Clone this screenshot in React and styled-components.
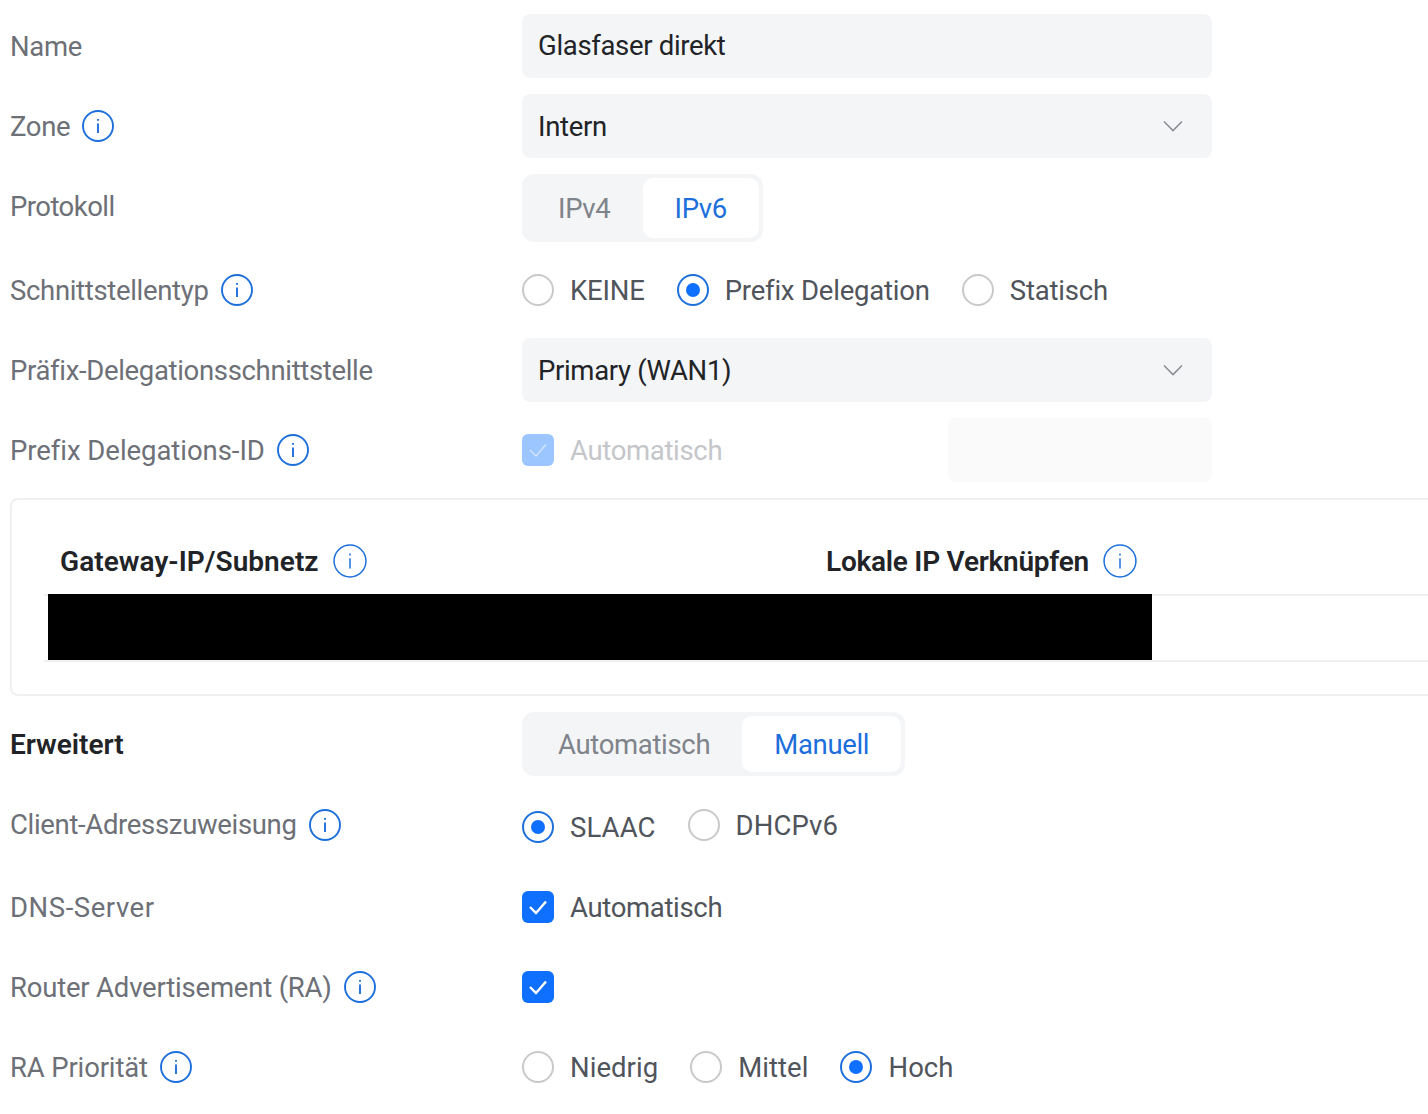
import React from "react";
import styled, { createGlobalStyle } from "styled-components";

const Global = createGlobalStyle`
  html, body { margin: 0; padding: 0; background: #fff; overflow: hidden; }
  body { font-family: "Roboto", "Liberation Sans", sans-serif; font-variant-ligatures: none; }
  * { box-sizing: border-box; }
`;
const Page = styled.div`
  width: 1428px; height: 1114px; overflow: hidden;
  padding: 14px 0 0 10px;
  display: flex; flex-direction: column; gap: 16px;
  font-size: 27.5px; letter-spacing: -0.33px;
`;
const Row = styled.div`
  display: grid; grid-template-columns: 512px 690px;
  min-height: ${p => p.$h || 64}px;
  align-items: center;
`;
const Label = styled.div`
  display: flex; align-items: center; gap: 12px;
  color: #6d7077;
  align-self: ${p => p.$top ? "start" : "center"};
  padding-top: ${p => p.$top ? 16 : 0}px;
  padding-bottom: ${p => p.$pb || 0}px;
  letter-spacing: ${p => p.$ls ?? -0.33}px;
  ${p => p.$bold && "color: #212327; font-weight: 600; font-size: 28px; letter-spacing: 0;"}
`;
const Field = styled.div`
  height: 64px; width: ${p => p.$w || "100%"};
  background: ${p => p.$disabled ? "#fafafb" : "#f4f5f7"};
  border-radius: 8px; padding: 0 16px ${p => p.$select ? 0 : 1}px;
  display: flex; align-items: center; justify-content: space-between;
  color: #212327;
`;
const Chevron = styled.svg`
  width: 20px; height: 12px; margin-right: 13px; fill: none; stroke: #8b8e94; stroke-width: 1.6;
`;
const Segmented = styled.div`
  display: inline-flex; justify-self: start;
  background: #f4f5f7; border-radius: 12px; padding: 4px;
  height: ${p => p.$h}px;
`;
const Seg = styled.div`
  padding: 0 32px; display: flex; align-items: center;
  border-radius: 10px;
  background: ${p => p.$active ? "#fff" : "transparent"};
  color: ${p => p.$active ? "#1d6fdc" : "#7f838a"};
`;
const Options = styled.div`
  display: flex; align-items: ${p => p.$start ? "flex-start" : "center"}; gap: 32px;
  letter-spacing: ${p => p.$ls ?? -0.2}px;
`;
const Option = styled.div`
  display: flex; align-items: center; gap: 16px; color: ${p => p.$muted ? "#c4c6ca" : "#50545b"};
  margin-top: ${p => p.$mt || 0}px;
`;
const Radio = styled.span`
  width: 32px; height: 32px; border-radius: 50%; flex: none;
  border: 2px solid ${p => p.$on ? "#1d6fdc" : "#c8c9cb"};
  display: flex; align-items: center; justify-content: center;
  &::after { content: ""; width: 14px; height: 14px; border-radius: 50%; background: ${p => p.$on ? "#0f6fff" : "transparent"}; }
`;
const Check = styled.span`
  width: 32px; height: 32px; border-radius: 6px; flex: none;
  background: ${p => p.$disabled ? "#9bc6ff" : "#0f6fff"};
  display: flex; align-items: center; justify-content: center;
`;
const CheckMark = styled.svg`
  width: 20px; height: 16px; fill: none; stroke: ${p => p.$disabled ? "#d5e6ff" : "#fff"}; stroke-width: ${p => p.$disabled ? 1.4 : 2.4};
`;
const Split = styled.div`
  display: flex; align-items: center; justify-content: space-between;
`;
const Card = styled.div`
  width: 1500px; height: 198px; flex: none;
  border: 2px solid #f0f0f1; border-radius: 8px;
  padding: 34px 0 0 32px;
`;
const THead = styled.div`
  display: grid; grid-template-columns: 766px 1fr;
  height: 60px; align-items: center; padding: 0 0 0 16px;
  color: #212327; font-weight: 600; font-size: 28px;
`;
const HeadCell = styled.div`
  display: flex; align-items: center; gap: 14px; padding-bottom: 6px;
  letter-spacing: ${p => p.$tight ? -0.25 : 0.05}px;
`;
const TRow = styled.div`
  height: 68px; border-top: 2px solid #eff0f1; border-bottom: 2px solid #eff0f1;
`;
const Redacted = styled.div`
  width: 1104px; height: 66px; margin: -2px 0 0 4px; background: #000;
`;
const InfoSvg = styled.svg`
  width: ${p => p.$s || 32}px; height: ${p => p.$s || 32}px; flex: none;
  fill: none; stroke: #1d6fdc;
`;
const Info = ({ thin }) => (
  <InfoSvg $s={thin ? 34 : 32} viewBox="0 0 32 32" strokeWidth={thin ? 1.4 : 1.9}>
    <circle cx="16" cy="16" r="15" />
    <path d="M16 13.5V23" />
    <path d="M16 9v1.8" />
  </InfoSvg>
);
const Down = () => (
  <Chevron viewBox="0 0 20 12"><path d="M1 1.5l9 9 9-9" /></Chevron>
);
const Tick = ({ disabled }) => (
  <CheckMark $disabled={disabled} viewBox="0 0 20 16"><path d="M2 8l6 6L18 2.5" /></CheckMark>
);

export default function App() {
  return (
    <>
      <Global />
      <Page>
        <Row><Label>Name</Label><Field>Glasfaser direkt</Field></Row>
        <Row><Label>Zone <Info /></Label><Field $select>Intern<Down /></Field></Row>
        <Row $h={68}>
          <Label $top $ls={-0.55}>Protokoll</Label>
          <Segmented $h={68}><Seg>IPv4</Seg><Seg $active>IPv6</Seg></Segmented>
        </Row>
        <Row>
          <Label>Schnittstellentyp <Info /></Label>
          <Options>
            <Option><Radio />KEINE</Option>
            <Option><Radio $on />Prefix Delegation</Option>
            <Option><Radio />Statisch</Option>
          </Options>
        </Row>
        <Row><Label>Präfix-Delegationsschnittstelle</Label><Field $select>Primary (WAN1)<Down /></Field></Row>
        <Row>
          <Label $ls={-0.05}>Prefix Delegations-ID <Info /></Label>
          <Split>
            <Option $muted><Check $disabled><Tick disabled /></Check>Automatisch</Option>
            <Field $disabled $w="264px" />
          </Split>
        </Row>
        <Card>
          <THead>
            <HeadCell>Gateway-IP/Subnetz <Info thin /></HeadCell>
            <HeadCell $tight>Lokale IP Verknüpfen <Info thin /></HeadCell>
          </THead>
          <TRow><Redacted /></TRow>
        </Card>
        <Row>
          <Label $bold>Erweitert</Label>
          <Segmented $h={64}><Seg>Automatisch</Seg><Seg $active>Manuell</Seg></Segmented>
        </Row>
        <Row $h={67}>
          <Label $pb={2}>Client-Adresszuweisung <Info /></Label>
          <Options $start $ls={0.1}>
            <Option $mt={3}><Radio $on />SLAAC</Option>
            <Option $mt={1}><Radio />DHCPv6</Option>
          </Options>
        </Row>
        <Row>
          <Label $ls={0.55}>DNS-Server</Label>
          <Option><Check><Tick /></Check>Automatisch</Option>
        </Row>
        <Row>
          <Label $ls={-0.2}>Router Advertisement (RA) <Info /></Label>
          <Check><Tick /></Check>
        </Row>
        <Row>
          <Label $ls={-0.15}>RA Priorität <Info /></Label>
          <Options $ls={0.05}>
            <Option><Radio />Niedrig</Option>
            <Option><Radio />Mittel</Option>
            <Option><Radio $on />Hoch</Option>
          </Options>
        </Row>
      </Page>
    </>
  );
}
